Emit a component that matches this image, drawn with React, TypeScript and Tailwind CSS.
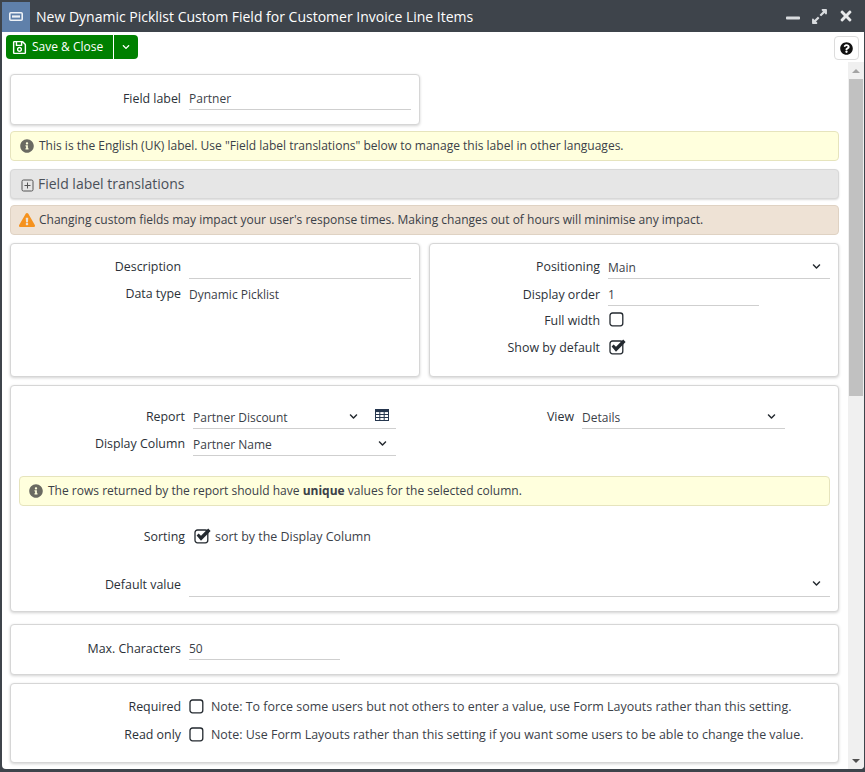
import React from "react";
import { FaInfoCircle, FaExclamationTriangle, FaRegSave, FaQuestionCircle, FaTimes, FaExpandAlt, FaMinus, FaChevronDown } from "react-icons/fa";

const Check = ({ on }: { on?: boolean }) => (
  <svg width="18" height="16" viewBox="0 0 18 16" className="shrink-0">
    <rect x="1" y="2" width="12.8" height="12.8" rx="2.5" fill="none" stroke="#23292f" strokeWidth="1.3" />
    {on && <path d="M2.6 7.4 L4.6 5.4 L7 7.8 L14.2 0.6 L16.6 3 L7 12.8 Z" fill="#23292f" />}
  </svg>
);

const TableIcon = () => (
  <svg width="14" height="12" viewBox="0 0 14 12" className="absolute right-[7px] top-[4px]">
    <rect x="0.5" y="0.5" width="13" height="11" fill="none" stroke="#26374f" />
    <rect x="0.5" y="0.5" width="13" height="2.6" fill="#26374f" />
    <path d="M0.5 5.5H13.5M0.5 8.5H13.5M4.8 1V11.5M9.2 1V11.5" stroke="#26374f" strokeWidth="1" />
  </svg>
);

const Chevron = () => <FaChevronDown className="text-[9px] text-[#23292f]" />;

const Label = ({ children, w = "w-[170px]" }: { children: React.ReactNode; w?: string }) => (
  <div className={`${w} shrink-0 text-right text-[12.4px] font-medium text-[#2b3138] leading-[16px]`}>{children}</div>
);

const Under = ({ children, cls, chevron, top = "pt-[3px]" }: { children?: React.ReactNode; cls: string; chevron?: boolean; top?: string }) => (
  <div className={`${cls} ${top} border-b border-[#cfcfcf] flex items-center justify-between text-[#3b4148]`}>
    <span className="leading-[16px]">{children}</span>
    {chevron && <span className="-mt-[3px] flex"><Chevron /></span>}
  </div>
);

const Card = ({ className, children }: { className: string; children?: React.ReactNode }) => (
  <div className={`bg-white border border-[#d6d6d6] rounded-[4px] shadow-[0_1px_3px_rgba(0,0,0,0.18)] ${className}`}>{children}</div>
);

const Notice = ({ className, children }: { className: string; children: React.ReactNode }) => (
  <div className={`h-[30px] bg-[#ffffdd] border border-[#e6e4bd] rounded-[4px] flex items-center pl-[9px] gap-[5px] text-[12.02px] text-[#3b4148] ${className}`}>
    <FaInfoCircle className="text-[14px] text-[#6a6a62] shrink-0" />
    <span>{children}</span>
  </div>
);

export default function App() {
  return (
    <div className="w-[865px] h-[772px] bg-[#3e444b] flex flex-col overflow-hidden text-[12px]" style={{ fontFamily: '"Open Sans", sans-serif' }}>
      <div className="h-[32px] shrink-0 flex items-center">
        <div className="ml-[2px] mt-[1px] w-[28px] h-[30px] bg-[#5f80aa] flex items-center justify-center">
          <svg width="14" height="9" viewBox="0 0 14 9">
            <rect x="0.8" y="0.8" width="12.4" height="7.4" rx="1" fill="none" stroke="#eef2f7" strokeWidth="1.6" />
            <rect x="3" y="3.4" width="8" height="2.2" fill="#eef2f7" />
          </svg>
        </div>
        <div className="ml-[6px] text-[14px] text-white flex-1">New Dynamic Picklist Custom Field for Customer Invoice Line Items</div>
        <div className="flex items-center text-[#d9dcdf] mr-[11px] gap-[10px]">
          <FaMinus className="text-[16px] mt-[3px]" />
          <FaExpandAlt className="text-[17px]" />
          <FaTimes className="text-[16px] text-[#e8eaec]" />
        </div>
      </div>
      <div className="flex-1 min-h-0 ml-[2px] mr-[1px] mb-[3px] bg-white rounded-b-[4px] flex flex-col overflow-hidden">
        <div className="h-[30px] shrink-0 flex items-start justify-between pt-[3px] pl-[4px] pr-[5px]">
          <div className="flex h-[24px] text-white">
            <div className="w-[107px] bg-[#008000] rounded-l-[4px] flex items-center pl-[6px] gap-[5px]">
              <FaRegSave className="text-[15px]" />
              <span>Save &amp; Close</span>
            </div>
            <div className="w-[24px] ml-[1px] bg-[#008000] rounded-r-[4px] flex items-center justify-center">
              <FaChevronDown className="text-[8px]" />
            </div>
          </div>
          <div className="w-[25px] h-[24px] mt-[1px] bg-white border border-[#dcdcdc] rounded-[4px] flex items-center justify-center">
            <FaQuestionCircle className="text-[13px] text-[#111]" />
          </div>
        </div>
        <div className="flex-1 min-h-0 flex">
          <div className="flex-1 pl-[8px] pr-[9px] pt-[12px] flex flex-col">
            <Card className="w-[410px] h-[51px] flex items-start pt-[11px]">
              <Label><span className="block pt-[5px]">Field label</span></Label>
              <Under cls="ml-[8px] w-[222px] h-[24px]">Partner</Under>
            </Card>
            <Notice className="mt-[6px]">This is the English (UK) label. Use "Field label translations" below to manage this label in other languages.</Notice>
            <div className="mt-[8px] h-[30px] bg-[#e6e6e6] border border-[#d8d8d8] rounded-[4px] shadow-[0_1px_2px_rgba(0,0,0,0.15)] flex items-center pl-[10px] gap-[4px] text-[14px] text-[#4a5058]">
              <svg width="13" height="13" viewBox="0 0 13 13" className="mt-[2px]">
                <rect x="1" y="1" width="11" height="11" rx="1.5" fill="none" stroke="#555" strokeWidth="1" />
                <path d="M3.5 6.5H9.5M6.5 3.5V9.5" stroke="#555" strokeWidth="1" />
              </svg>
              <span className="-mt-[2px]">Field label translations</span>
            </div>
            <div className="mt-[6px] h-[30px] bg-[#eee2d5] border border-[#dfd2c3] rounded-[4px] flex items-center pl-[8px] gap-[4px] text-[12.02px] text-[#3b4148]">
              <FaExclamationTriangle className="text-[16px] text-[#f5921e] shrink-0" />
              <span>Changing custom fields may impact your user's response times. Making changes out of hours will minimise any impact.</span>
            </div>
            <div className="mt-[8px] flex gap-[9px]">
              <Card className="w-[410px] h-[134px] pt-[11px]">
                <div className="flex">
                  <Label><span className="block pt-[4px]">Description</span></Label>
                  <Under cls="ml-[8px] w-[222px] h-[24px]" />
                </div>
                <div className="flex mt-[7px]">
                  <Label>Data type</Label>
                  <div className="ml-[8px] text-[#3b4148] leading-[16px] pt-[1px]">Dynamic Picklist</div>
                </div>
              </Card>
              <Card className="flex-1 h-[134px] pt-[11px]">
                <div className="flex">
                  <Label><span className="block pt-[4px]">Positioning</span></Label>
                  <Under cls="ml-[8px] w-[222px] h-[24px] pr-[9px]" chevron>Main</Under>
                </div>
                <div className="flex">
                  <Label><span className="block pt-[8px]">Display order</span></Label>
                  <Under cls="ml-[8px] w-[151px] h-[27px]" top="pt-[5px]">1</Under>
                </div>
                <div className="flex items-center h-[27px] pt-[2px]">
                  <Label>Full width</Label>
                  <span className="ml-[9px] -mt-[3px] flex"><Check /></span>
                </div>
                <div className="flex items-center h-[27px] pt-[2px]">
                  <Label>Show by default</Label>
                  <span className="ml-[9px] -mt-[2px] flex"><Check on /></span>
                </div>
              </Card>
            </div>
            <Card className="mt-[8px] h-[227px] pt-[19px] px-[8px]">
              <div className="flex">
                <div className="flex flex-col">
                  <div className="flex">
                    <Label w="w-[166px]"><span className="block pt-[4px]">Report</span></Label>
                    <div className="relative">
                      <Under cls="ml-[8px] w-[203px] h-[24px] pr-[38px]" chevron>Partner Discount</Under>
                      <TableIcon />
                    </div>
                  </div>
                  <div className="flex h-[27px]">
                    <Label w="w-[166px]"><span className="block pt-[7px]">Display Column</span></Label>
                    <Under cls="ml-[8px] w-[203px] h-[27px] pr-[9px]" top="pt-[5px]" chevron>Partner Name</Under>
                  </div>
                </div>
                <div className="flex ml-[4px]">
                  <Label w="w-[174px]"><span className="block pt-[4px]">View</span></Label>
                  <Under cls="ml-[8px] w-[203px] h-[24px] pr-[9px]" chevron>Details</Under>
                </div>
              </div>
              <Notice className="mt-[20px]">
                The rows returned by the report should have <b className="font-bold">unique</b> values for the selected column.
              </Notice>
              <div className="flex items-center mt-[20px] h-[22px] text-[12.45px]">
                <Label w="w-[166px]">Sorting</Label>
                <span className="ml-[9px] -mt-[3px] flex"><Check on /></span>
                <span className="ml-[3px] text-[#3b4148] mt-[1px]">sort by the Display Column</span>
              </div>
              <div className="flex mt-[23px] -mx-[8px]">
                <Label><span className="block pt-[6px]">Default value</span></Label>
                <Under cls="ml-[8px] w-[641px] h-[26px] pr-[9px]" chevron />
              </div>
            </Card>
            <Card className="mt-[12px] h-[51px] pt-[11px] flex items-start">
              <Label><span className="block pt-[5px]">Max. Characters</span></Label>
              <Under cls="ml-[8px] w-[151px] h-[24px]">50</Under>
            </Card>
            <Card className="mt-[8px] h-[80px] pt-[9px] text-[12.45px]">
              <div className="flex items-center h-[27px]">
                <Label>Required</Label>
                <span className="ml-[8px] -mt-[2px] flex"><Check /></span>
                <span className="ml-[4px] text-[#3b4148] mt-[1px]">Note: To force some users but not others to enter a value, use Form Layouts rather than this setting.</span>
              </div>
              <div className="flex items-center h-[27px] mt-[1px]">
                <Label>Read only</Label>
                <span className="ml-[8px] -mt-[2px] flex"><Check /></span>
                <span className="ml-[4px] text-[#3b4148] mt-[1px]">Note: Use Form Layouts rather than this setting if you want some users to be able to change the value.</span>
              </div>
            </Card>
          </div>
          <div className="w-[16px] shrink-0 bg-[#f0f0f0] flex flex-col items-center">
            <div className="h-[17px] flex items-center justify-center">
              <div className="w-0 h-0 border-x-[4px] border-x-transparent border-b-[4px] border-b-[#a3a3a3]" />
            </div>
            <div className="w-[14px] h-[317px] bg-[#c1c1c1]" />
            <div className="mt-auto h-[17px] flex items-center justify-center">
              <div className="w-0 h-0 border-x-[4px] border-x-transparent border-t-[4px] border-t-[#505050]" />
            </div>
          </div>
        </div>
      </div>
    </div>
  );
}
